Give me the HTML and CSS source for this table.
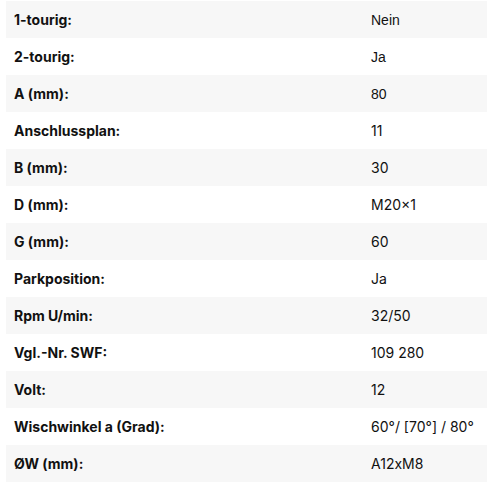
FILE: index.html
```html
<!DOCTYPE html>
<html lang="de">
<head>
<meta charset="utf-8">
<link rel="stylesheet" href="styles.css">
</head>
<body>
<table class="specs">
<tbody>
<tr><th>1-tourig:</th><td class="arial">Nein</td></tr>
<tr><th>2-tourig:</th><td class="arial">Ja</td></tr>
<tr><th>A (mm):</th><td class="arial">80</td></tr>
<tr><th>Anschlussplan:</th><td>11</td></tr>
<tr><th>B (mm):</th><td>30</td></tr>
<tr><th>D (mm):</th><td>M20×1</td></tr>
<tr><th>G (mm):</th><td>60</td></tr>
<tr><th>Parkposition:</th><td>Ja</td></tr>
<tr><th>Rpm U/min:</th><td>32/50</td></tr>
<tr><th>Vgl.-Nr. SWF:</th><td>109 280</td></tr>
<tr><th>Volt:</th><td class="geo">12</td></tr>
<tr><th>Wischwinkel a (Grad):</th><td class="geo">60°/ [70°] / 80°</td></tr>
<tr><th>ØW (mm):</th><td class="geo">A12xM8</td></tr>
</tbody>
</table>
</body>
</html>
```

FILE: styles.css
```css
html, body {
  margin: 0;
  padding: 0;
  background: #fff;
}
body {
  padding: 1px 0 0 6px;
  font-family: Inter, "Noto Sans", sans-serif;
  color: #111;
}
.specs {
  width: 481px;
  border-collapse: collapse;
  font-size: 14px;
}
.specs tr {
  height: 37px;
}
.specs tr:nth-child(odd) {
  background: #f7f7f7;
}
.specs th {
  text-align: left;
  font-weight: 700;
  padding: 0 8px;
  width: 341px;
}
.specs td {
  padding: 0 8px;
  font-weight: 400;
}
.specs td.arial {
  font-family: "Liberation Sans", Arial, sans-serif;
}
.specs td.geo {
  font-family: Inter, sans-serif;
  font-weight: 400;
}
```
